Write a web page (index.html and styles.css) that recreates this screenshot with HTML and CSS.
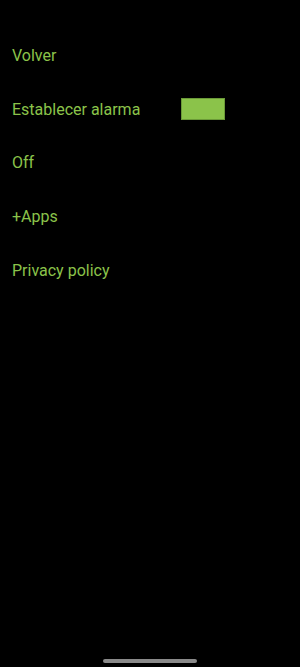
FILE: index.html
```html
<!DOCTYPE html>
<html>
<head>
<meta charset="utf-8">
<link rel="stylesheet" href="styles.css">
</head>
<body>
<div class="screen">
  <ul class="menu">
    <li class="item"><span class="label">Volver</span></li>
    <li class="item"><span class="label">Establecer alarma</span><span class="swatch"></span></li>
    <li class="item"><span class="label">Off</span></li>
    <li class="item"><span class="label">+Apps</span></li>
    <li class="item"><span class="label">Privacy policy</span></li>
  </ul>
  <div class="home-bar"></div>
</div>
</body>
</html>
```
FILE: styles.css
```css
html, body {
  margin: 0;
  padding: 0;
  background: #000;
}
.screen {
  width: 300px;
  height: 667px;
  position: relative;
  background: #000;
  font-family: Roboto, "Noto Sans", sans-serif;
  overflow: hidden;
}
.menu {
  list-style: none;
  margin: 0;
  padding: 28.5px 0 0 12px;
}
.item {
  height: 53.75px;
  display: flex;
  align-items: center;
  color: #8bc34a;
  font-size: 16px;
}
.label {
  width: 169px;
}
.swatch {
  width: 42px;
  height: 20px;
  margin-top: -1px;
  background: #8bc34a;
  border: 1px solid #6b9a38;
}
.home-bar {
  position: absolute;
  left: 103px;
  top: 659px;
  width: 94px;
  height: 4px;
  border-radius: 2px;
  background: #8a8a8a;
}
```
